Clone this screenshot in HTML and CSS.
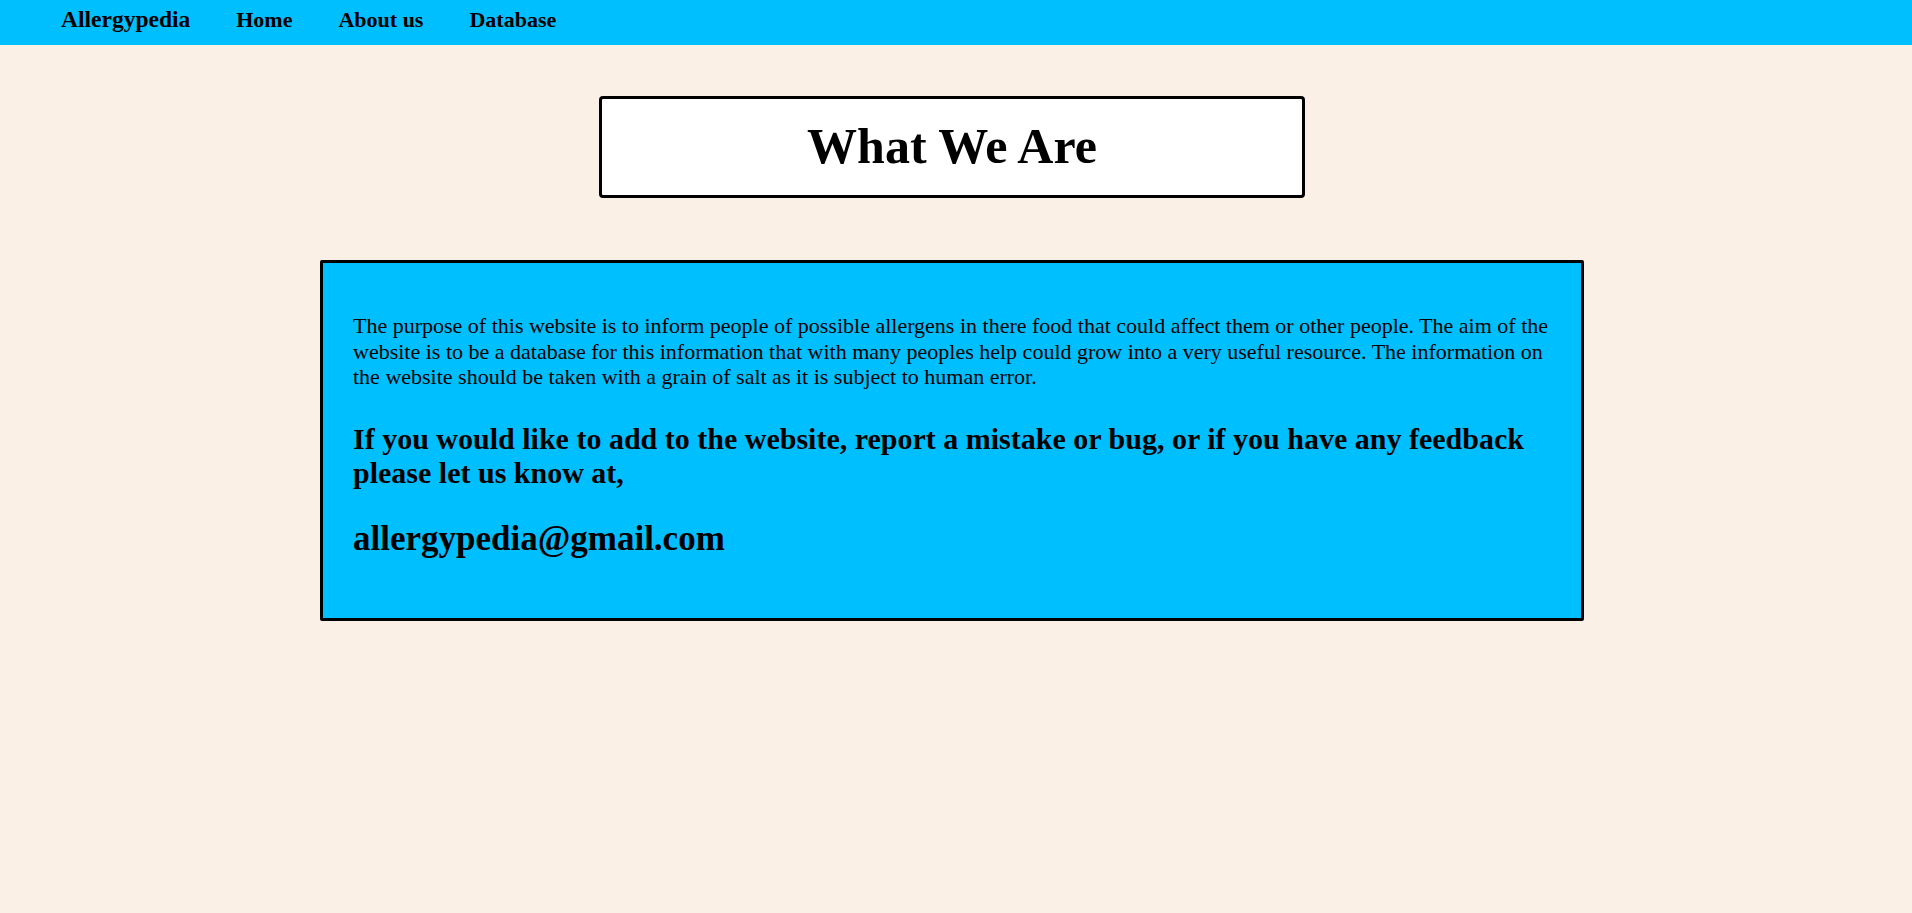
FILE: index.html
```html
<!DOCTYPE html>
<html lang="en">
<head>
<meta charset="utf-8">
<title>About us - Allergypedia</title>
<link rel="stylesheet" href="styles.css">
</head>
<body>
<nav class="navbar">
  <a class="nav-link brand" href="#">Allergypedia</a>
  <a class="nav-link" href="#">Home</a>
  <a class="nav-link" href="#">About us</a>
  <a class="nav-link" href="#">Database</a>
</nav>
<main class="page">
  <div class="title-box">
    <h1 class="title">What We Are</h1>
  </div>
  <section class="about">
    <p class="about-text">The purpose of this website is to inform people of possible allergens in there food that could affect them or other people. The aim of the website is to be a database for this information that with many peoples help could grow into a very useful resource. The information on the website should be taken with a grain of salt as it is subject to human error.</p>
    <h3 class="about-cta">If you would like to add to the website, report a mistake or bug, or if you have any feedback please let us know at,</h3>
    <h2 class="about-email">allergypedia@gmail.com</h2>
  </section>
</main>
</body>
</html>
```

FILE: styles.css
```css
html, body {
  margin: 0;
  padding: 0;
}

body {
  background: #faf0e6;
  color: #000;
  font-family: "Liberation Serif", "Times New Roman", serif;
  min-height: 913px;
}

.navbar {
  display: flex;
  align-items: baseline;
  gap: 46px;
  height: 45px;
  box-sizing: border-box;
  padding: 6px 0 0 61px;
  background: #00bfff;
}

.nav-link {
  color: #000;
  text-decoration: none;
  font-weight: bold;
  font-size: 22px;
  line-height: 27px;
}

.brand {
  font-size: 23.5px;
}

.page {
  display: flex;
  flex-direction: column;
  align-items: center;
  padding: 51px 8px 0 0;
}

.title-box {
  width: 700px;
  height: 96px;
  background: #fff;
  border: 3px solid #000;
  border-radius: 4px;
  text-align: center;
}

.title {
  margin: 0;
  font-size: 50px;
  font-weight: bold;
  line-height: 94px;
}

.about {
  margin-top: 62px;
  width: 1198px;
  background: #00bfff;
  border: 3px solid #000;
  border-radius: 2px;
  padding: 50px 30px 59.5px 30px;
}

.about-text {
  margin: 0;
  font-size: 22px;
  line-height: 25.5px;
}

.about-cta {
  margin: 32px 0 0;
  font-size: 30px;
  line-height: 34px;
  font-weight: bold;
}

.about-email {
  margin: 29px 0 0;
  font-size: 35px;
  line-height: 40px;
  font-weight: bold;
}
```
